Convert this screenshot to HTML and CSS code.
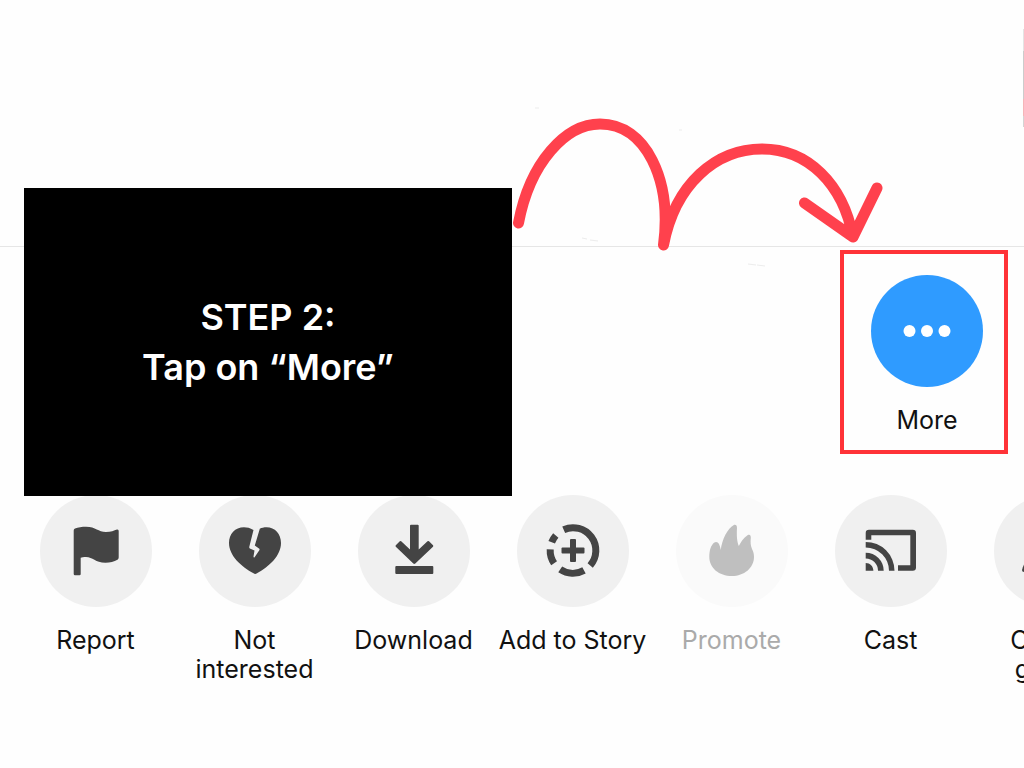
FILE: index.html
```html
<!DOCTYPE html>
<html lang="en">
<head>
<meta charset="utf-8">
<title>Step 2: Tap on More</title>
<link rel="stylesheet" href="styles.css">
</head>
<body>
<main class="guide">
  <section class="contacts"></section>
  <div class="next-contact"></div>

  <section class="channels">
    <button class="action action-more" type="button">
      <svg class="disc disc-blue" viewBox="0 0 112 112" aria-hidden="true">
        <g fill="#fff"><circle cx="38.500" cy="56" r="6"/><circle cx="56" cy="56" r="6"/><circle cx="73.500" cy="56" r="6"/></g>
      </svg>
      <span class="label">More</span>
    </button>
  </section>

  <section class="actions">
    <button class="action" type="button">
      <svg class="disc" viewBox="0 0 112 112" aria-hidden="true"><path d="M33.700 35.500Q33.700 34 35 33.500C38 32.300 42 31.700 46 31.700C56 31.700 58 37 66 37C71 37 74 35.500 77 34.500Q78.700 34.200 78.700 36V62.500Q78.700 64 77.500 64.800C74 66.800 70 67.700 65.500 67.700C55 67.700 53 62 46 62C43.500 62 42 62.200 40.700 62.800V79Q40.700 80.300 39.500 80.300H35Q33.700 80.300 33.700 79Z"/></svg>
      <span class="label">Report</span>
    </button>
    <button class="action" type="button">
      <svg class="disc" viewBox="0 0 112 112" aria-hidden="true"><path d="M54.500 35C51 33 48 32.300 45 32.300C36 32.300 30 39 30 48C30 61 43 72 54.500 78.300Q56.200 79.500 58 78.300C69.500 72 82 61 82 48C82 39 76 32.300 67.500 32.300C65 32.300 62.500 32.800 60.800 33.800L55.800 50.600L60.300 53.700Q60.800 54.300 60.300 55.200L55.600 62.200Q54.600 63 54.500 61.500L55.500 55.600L50.800 53.400Q50 52.800 50.300 51.800Z"/></svg>
      <span class="label">Not interested</span>
    </button>
    <button class="action" type="button">
      <svg class="disc" viewBox="0 0 112 112" aria-hidden="true"><path d="M53 29.700H59.700Q60.700 29.700 60.700 30.700V54.500L69.500 46.300Q70.300 45.600 71 46.300L75 50.300Q75.600 51 75 51.700L57.300 68.500Q56.300 69.300 55.300 68.500L37.800 51.700Q37.200 51 37.800 50.300L41.800 46.300Q42.500 45.600 43.200 46.300L52 54.500V30.700Q52 29.700 53 29.700Z"/><rect x="37.300" y="71" width="38" height="8" rx="1"/></svg>
      <span class="label">Download</span>
    </button>
    <button class="action" type="button">
      <svg class="disc" viewBox="0 0 112 112" aria-hidden="true"><g class="ring"><path d="M46.700 34.700A22.800 22.800 0 0 1 73.200 70.500M67 75.400A22.800 22.800 0 0 1 43.200 74.400M37.100 68.200A22.800 22.800 0 0 1 33.200 54.300M34.700 47.300A22.800 22.800 0 0 1 38.800 40.500"/></g><rect x="44.500" y="52.500" width="23" height="6" rx="1"/><rect x="53" y="44" width="6" height="23" rx="1"/></svg>
      <span class="label">Add to Story</span>
    </button>
    <button class="action" type="button" disabled>
      <svg class="disc" viewBox="0 0 112 112" aria-hidden="true"><path d="M33.300 62C33.300 55 35 50.500 38 47.800C40 46.300 42 47.200 43 49C44 51 44.500 53 44.700 55C46 44 52 33 57.500 30.200C59.700 29.200 61 30.500 61 33C60.500 40 61 47 62.800 51C64.500 48 67 43 71.500 40.200C74 39 75 40.500 74.800 43C74.300 47 74.700 51 76 54C77.500 57 78 59 78 62C78 73 68 81 56 81C43 81 33.300 73 33.300 62Z"/></svg>
      <span class="label">Promote</span>
    </button>
    <button class="action" type="button">
      <svg class="disc" viewBox="0 0 112 112" aria-hidden="true"><path d="M30.700 44.700V38Q30.700 34.700 34 34.700H77.700Q81 34.700 81 38V72.400Q81 75.700 77.700 75.700H63V70.200H75.300V40.200H36.300V44.700Z"/><path d="M30.700 68C35 68 38.400 71.400 38.400 75.700H30.700ZM30.700 57.700A18 18 0 0 1 48.700 75.700H43A12.300 12.300 0 0 0 30.700 63.400ZM30.700 46.900A28.800 28.800 0 0 1 59.500 75.700H54A23.300 23.300 0 0 0 30.700 52.400Z"/></svg>
      <span class="label">Cast</span>
    </button>
    <button class="action" type="button">
      <svg class="disc" viewBox="0 0 112 112" aria-hidden="true"><circle cx="56" cy="42" r="11"/><path d="M28 75C31 62 42 57 56 57S81 62 84 75Q84 77 82 77H30Q28 77 28 75Z"/></svg>
      <span class="label">Create<br>group</span>
    </button>
  </section>

  <div class="banner"><h1 class="step">STEP 2:<br>Tap on “More”</h1></div>

  <svg class="pointer" viewBox="0 0 400 160" aria-hidden="true">
    <path class="speck" d="M35 8h4M179 30h3M82 138l5 1M90 140l8 1M248 164l8 1M257 165l8 1"/>
    <path class="swoop" d="M18.500 123C30 62 66 24 100 24C146 24 172 80 163.500 145C175 84 216 49 262 49C308 49 343 84 353 137M304.500 103L353 137L377 88"/>
  </svg>
</main>
</body>
</html>
```
FILE: styles.css
```css
* {
  box-sizing: border-box;
}

body {
  margin: 0;
  background: #fefefe;
  color: #111;
  font-family: Inter, "Liberation Sans", sans-serif;
}

.guide {
  position: relative;
  min-height: 100vh;
  overflow: hidden;
}

.contacts {
  height: 247px;
  border-bottom: 1px solid #e6e6e6;
}

.channels {
  display: flex;
  justify-content: flex-end;
  padding: 3px 16px 0;
}

.actions {
  display: flex;
  margin-top: 41px;
  padding-left: 16px;
}

.action {
  display: flex;
  flex: 0 0 159px;
  flex-direction: column;
  align-items: center;
  gap: 19px;
  padding: 0;
  border: 0;
  background: none;
  color: inherit;
  font: inherit;
}

.action-more {
  flex-basis: 168px;
  padding: 21px 0 15px 6px;
  border: 4px solid #ff3338;
}

.disc {
  width: 112px;
  height: 112px;
  border-radius: 50%;
  background: #f0f0f0;
  fill: #444;
}

.disc-blue {
  background: #2f9bff;
}

.label {
  max-width: 156px;
  font-size: 25px;
  line-height: 29px;
}

.action:disabled .disc {
  background: #fafafa;
  fill: #bfbfbf;
}

.action:disabled .label {
  color: #aaa;
}

.ring {
  fill: none;
  stroke: #444;
  stroke-width: 7;
}

.banner {
  position: absolute;
  top: 188px;
  left: 24px;
  display: flex;
  align-items: center;
  justify-content: center;
  width: 488px;
  min-height: 308px;
  background: #000;
  color: #fff;
}

.step {
  margin: 0;
  font-size: 36px;
  font-weight: 600;
  line-height: 50px;
  text-align: center;
  white-space: nowrap;
}

.pointer {
  position: absolute;
  top: 100px;
  left: 500px;
  width: 400px;
  height: 160px;
  overflow: visible;
  fill: none;
}

.swoop {
  stroke: #ff414d;
  stroke-width: 11;
  stroke-linecap: round;
  stroke-linejoin: round;
}

.speck {
  stroke: #ececec;
}

.next-contact {
  position: absolute;
  top: 29px;
  right: 0;
  width: 1px;
  height: 98px;
  background: linear-gradient(#e4e4e4 22px, #ccc 22px 70px, #f5b5b8 70px 87px, #d4d4d4 87px);
}
```
